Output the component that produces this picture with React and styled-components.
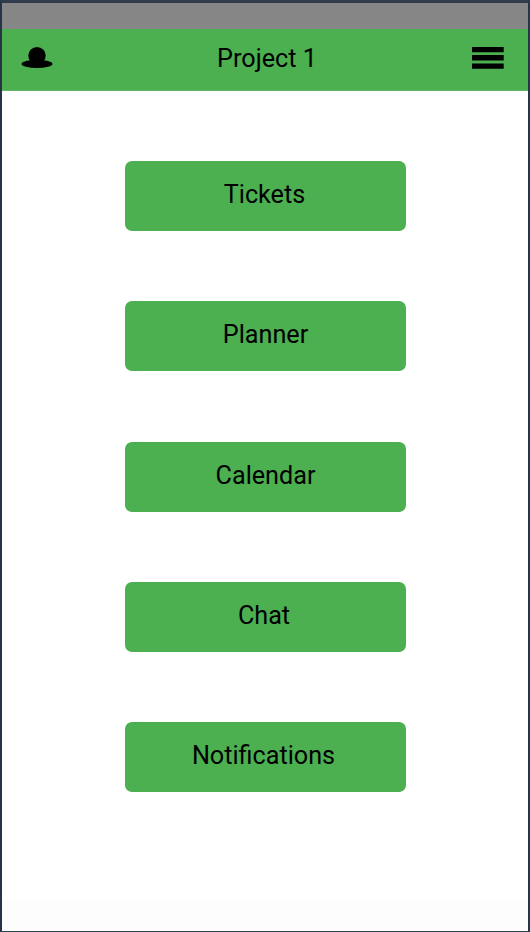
import React from "react";
import styled, { createGlobalStyle } from "styled-components";

const GlobalStyle = createGlobalStyle`
  * { box-sizing: border-box; }
  body { margin: 0; background: #fff; font-family: Roboto, sans-serif; color: #000; }
`;

const Screen = styled.div`
  display: flex;
  flex-direction: column;
  height: 932px;
  border: 2px solid #263445;
  border-top: 3px solid #303c4c;
  border-bottom: 1px solid #36414d;
  background: linear-gradient(#fff 0 898px, #fdfdfd 898px);
`;

const StatusBar = styled.div`
  height: 26px;
  flex: none;
  background: #868686;
`;

const Header = styled.header`
  display: grid;
  grid-template-columns: 32px 1fr 32px;
  align-items: start;
  flex: none;
  height: 62px;
  padding: 14px 24px 0 19px;
  background: #4caf50;
  border-bottom: 1px solid #60b563;
`;

const Title = styled.h1`
  margin: 0;
  padding: 1px 0 0 9px;
  text-align: center;
  font-size: 25.2px;
  line-height: 30px;
  font-weight: 400;
`;

const IconButton = styled.button`
  display: flex;
  padding: 3px 0 0;
  border: 0;
  background: none;
  color: inherit;
`;

const Menu = styled.nav`
  display: flex;
  flex-direction: column;
  align-items: center;
  gap: 70.25px;
  padding: 70px 0 0 1px;
`;

const MenuButton = styled.button`
  width: 280.6px;
  height: 70px;
  padding: 0 4px 2px ${({ $inset }) => $inset}px;
  border: 0;
  border-radius: 7px;
  background: #4caf50;
  color: #000;
  font: 400 25.2px/30px Roboto, sans-serif;
`;

const items = [
  { label: "Tickets", inset: 2 },
  { label: "Planner", inset: 4 },
  { label: "Calendar", inset: 4 },
  { label: "Chat", inset: 1 },
  { label: "Notifications", inset: 0 },
];

export default function App() {
  return (
    <>
      <GlobalStyle />
      <Screen>
        <StatusBar />
        <Header>
          <IconButton aria-label="Profile">
            <svg width="32" height="23" viewBox="0 0 32 23">
              <circle cx="16" cy="9.6" r="8.7" />
              <ellipse cx="16" cy="17.9" rx="15.5" ry="4.2" />
            </svg>
          </IconButton>
          <Title>Project 1</Title>
          <IconButton aria-label="Open menu">
            <svg width="32" height="24" viewBox="0 0 32 24">
              <path d="M0 .9h31.7v5.3H0zM0 9.1h31.7v5.3H0zM0 17.5h31.7v5.3H0z" />
            </svg>
          </IconButton>
        </Header>
        <Menu>
          {items.map(({ label, inset }) => (
            <MenuButton key={label} $inset={inset}>{label}</MenuButton>
          ))}
        </Menu>
      </Screen>
    </>
  );
}
